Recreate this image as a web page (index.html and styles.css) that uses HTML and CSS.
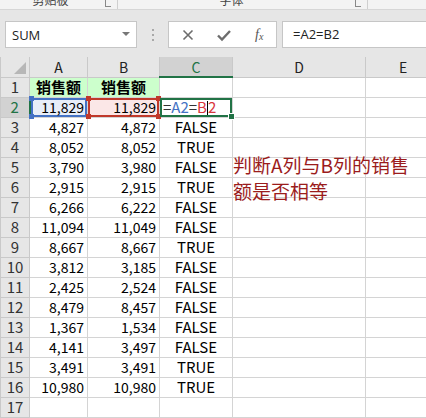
FILE: index.html
```html
<!DOCTYPE html>
<html>
<head>
<meta charset="utf-8">
<link rel="stylesheet" href="styles.css">
</head>
<body>
<div class="ribbon">
  <div class="grp g1"><span class="glabel">剪贴板</span><span class="launch"></span></div>
  <div class="grp g2"><span class="glabel">字体</span><span class="launch"></span></div>
</div>
<div class="fbar">
  <div class="namebox"><span>SUM</span><span class="caret"></span></div>
  <div class="dots"><i></i><i></i><i></i></div>
  <div class="fxgroup">
    <svg class="ic" width="14" height="14" viewBox="0 0 14 14"><path d="M2.5 2.5 L11.5 11.5 M11.5 2.5 L2.5 11.5" stroke="#6d6d6d" stroke-width="1.6" fill="none"/></svg>
    <svg class="ic" width="16" height="14" viewBox="0 0 16 14"><path d="M2 7.5 L6 11.5 L14 3" stroke="#6d6d6d" stroke-width="2.4" fill="none"/></svg>
    <span class="fx">f<sub>x</sub></span>
  </div>
  <div class="finput">=A2=B2</div>
</div>
<div class="sheet">
<table class="grid">
  <colgroup><col class="c0"><col class="ca"><col class="cb"><col class="cc"><col class="cd"><col class="ce"></colgroup>
  <tr class="hdr"><th class="corner"><span class="tri"></span></th><th>A</th><th>B</th><th class="hsel">C</th><th>D</th><th>E</th></tr>
  <tr><th>1</th><td class="green title">销售额</td><td class="green title">销售额</td><td></td><td></td><td></td></tr>
  <tr><th class="rsel">2</th><td class="num sela"><span class="h bh tl"></span><span class="h bh bl"></span>11,829</td><td class="num selb"><span class="h rh tl"></span><span class="h rh tr"></span><span class="h rh bl"></span><span class="h rh br"></span>11,829</td><td class="selc"><span class="k">=</span><span class="ba">A2</span><span class="k">=</span><span class="rb">B</span><span class="cur"></span><span class="rb">2</span><span class="h gh br"></span></td><td></td><td></td></tr>
  <tr><th>3</th><td class="num">4,827</td><td class="num">4,872</td><td class="bool">FALSE</td><td></td><td></td></tr>
  <tr><th>4</th><td class="num">8,052</td><td class="num">8,052</td><td class="bool">TRUE</td><td></td><td></td></tr>
  <tr><th>5</th><td class="num">3,790</td><td class="num">3,980</td><td class="bool">FALSE</td><td></td><td></td></tr>
  <tr><th>6</th><td class="num">2,915</td><td class="num">2,915</td><td class="bool">TRUE</td><td></td><td></td></tr>
  <tr><th>7</th><td class="num">6,266</td><td class="num">6,222</td><td class="bool">FALSE</td><td></td><td></td></tr>
  <tr><th>8</th><td class="num">11,094</td><td class="num">11,049</td><td class="bool">FALSE</td><td></td><td></td></tr>
  <tr><th>9</th><td class="num">8,667</td><td class="num">8,667</td><td class="bool">TRUE</td><td></td><td></td></tr>
  <tr><th>10</th><td class="num">3,812</td><td class="num">3,185</td><td class="bool">FALSE</td><td></td><td></td></tr>
  <tr><th>11</th><td class="num">2,425</td><td class="num">2,524</td><td class="bool">FALSE</td><td></td><td></td></tr>
  <tr><th>12</th><td class="num">8,479</td><td class="num">8,457</td><td class="bool">FALSE</td><td></td><td></td></tr>
  <tr><th>13</th><td class="num">1,367</td><td class="num">1,534</td><td class="bool">FALSE</td><td></td><td></td></tr>
  <tr><th>14</th><td class="num">4,141</td><td class="num">3,497</td><td class="bool">FALSE</td><td></td><td></td></tr>
  <tr><th>15</th><td class="num">3,491</td><td class="num">3,491</td><td class="bool">TRUE</td><td></td><td></td></tr>
  <tr><th>16</th><td class="num">10,980</td><td class="num">10,980</td><td class="bool">TRUE</td><td></td><td></td></tr>
  <tr><th>17</th><td></td><td></td><td></td><td></td><td></td></tr>
</table>
<div class="note">判断A列与B列的销售<br>额是否相等</div>
</div>
</body>
</html>
```
FILE: styles.css
```css
html, body {
  margin: 0;
  padding: 0;
  background: #ffffff;
  font-family: "Noto Sans CJK SC", "Noto Sans", sans-serif;
  width: 426px;
  height: 418px;
  overflow: hidden;
}
.ribbon {
  height: 10px;
  background: #f3f3f3;
  border-bottom: 1px solid #d6d6d6;
  display: flex;
  overflow: hidden;
  box-sizing: border-box;
}
.grp {
  position: relative;
  height: 10px;
  border-right: 1px solid #cfcfcf;
  box-sizing: border-box;
}
.g1 { width: 118px; }
.g2 { width: 250px; }
.glabel {
  display: block;
  font-size: 12px;
  line-height: 12px;
  margin-top: -6px;
  color: #444;
  text-align: center;
}
.g1 .glabel { padding-right: 16px; }
.g2 .glabel { padding-right: 22px; }
.launch {
  position: absolute;
  right: 6px;
  top: 0;
  width: 5px;
  height: 6px;
  border-left: 1px solid #888;
  border-bottom: 1px solid #888;
}
.fbar {
  height: 47px;
  background: #e6e6e6;
  display: flex;
  align-items: flex-start;
  padding-top: 11px;
  box-sizing: border-box;
}
.namebox {
  margin-left: 5px;
  width: 132px;
  height: 27px;
  background: #fff;
  border: 1px solid #c6c6c6;
  box-sizing: border-box;
  display: flex;
  align-items: center;
  justify-content: space-between;
  padding: 0 6px 0 6px;
  font-family: "Open Sans", "Noto Sans", sans-serif;
  font-size: 13px;
  color: #222;
}
.caret {
  width: 0;
  height: 0;
  border-left: 4px solid transparent;
  border-right: 4px solid transparent;
  border-top: 4px solid #777;
  margin-bottom: 2px;
}
.dots {
  width: 31px;
  height: 27px;
  display: flex;
  flex-direction: column;
  align-items: center;
  justify-content: center;
  gap: 3px;
}
.dots i {
  display: block;
  width: 2px;
  height: 2px;
  background: #a8a8a8;
}
.fxgroup {
  width: 109px;
  height: 27px;
  background: #fff;
  border: 1px solid #c6c6c6;
  box-sizing: border-box;
  display: flex;
  align-items: center;
  padding-left: 12px;
  gap: 21px;
}
.fx {
  font-family: "Liberation Serif", serif;
  font-style: italic;
  font-size: 14px;
  color: #555;
  margin-left: 2px;
}
.fx sub {
  font-size: 10px;
  vertical-align: -1px;
}
.finput {
  margin-left: 5px;
  flex: 1;
  height: 27px;
  background: #fff;
  border: 1px solid #c6c6c6;
  border-right: none;
  box-sizing: border-box;
  font-family: "Open Sans", "Noto Sans", sans-serif;
  font-size: 13px;
  line-height: 25px;
  padding-left: 10px;
  color: #222;
}
.sheet {
  position: relative;
}
.grid {
  border-collapse: collapse;
  table-layout: fixed;
  width: 440px;
}
.c0 { width: 29px; }
.ca { width: 58px; }
.cb { width: 72px; }
.cc { width: 73px; }
.cd { width: 133px; }
.ce { width: 75px; }
.grid tr { height: 20px; }
.grid th, .grid td {
  height: 20px;
  padding: 0;
  border: 1px solid #d4d4d4;
  box-sizing: border-box;
  white-space: nowrap;
  line-height: 18px;
}
.grid th {
  background: #e6e6e6;
  border-color: #c9c9c9;
  font-weight: normal;
  font-size: 15px;
  color: #333;
  text-align: center;
}
.hdr th {
  font-size: 14px;
  border-top: none;
  color: #222;
}
.grid th.hsel {
  background: #d2d2d2;
  color: #217346;
  border-bottom: 2px solid #217346;
}
.grid th.rsel {
  background: #d2d2d2;
  color: #217346;
  border-right: 2px solid #217346;
}
.corner { position: relative; }
.tri {
  position: absolute;
  right: 3px;
  bottom: 3px;
  width: 0;
  height: 0;
  border-left: 12px solid transparent;
  border-bottom: 12px solid #b7b7b7;
}
.green { background: #ccffcc; }
.title {
  text-align: center;
  font-weight: bold;
  font-size: 15px;
}
.num {
  text-align: right;
  font-size: 14px;
  padding-right: 3px !important;
  color: #000;
}
.bool {
  text-align: center;
  font-size: 15px;
  color: #000;
}
.sela, .selb, .selc { position: relative; }
.sela {
  background: #e8eef8;
  box-shadow: inset 0 0 0 2px #4472c4;
}
.selb {
  background: #fbe7e7;
  box-shadow: inset 0 0 0 2px #c0392b;
}
.selc {
  box-shadow: inset 0 0 0 2px #217346;
  font-size: 15px;
  line-height: 18px;
  padding-left: 3px !important;
  color: #222;
}
.h {
  position: absolute;
  width: 5px;
  height: 5px;
}
.bh { background: #4472c4; }
.rh { background: #c0392b; }
.gh { background: #217346; border: 1px solid #fff; box-sizing: content-box; }
.tl { left: -2px; top: -2px; }
.tr { right: -2px; top: -2px; }
.bl { left: -2px; bottom: -2px; }
.br { right: -2px; bottom: -2px; }
.gh.br { right: -3px; bottom: -3px; }
.ba { color: #4472c4; }
.rb { color: #d9363e; }
.k { color: #333; }
.cur {
  display: inline-block;
  width: 1px;
  height: 14px;
  background: #000;
  vertical-align: -2px;
}
.note {
  position: absolute;
  left: 233px;
  top: 95px;
  font-size: 19px;
  line-height: 26px;
  color: #9b1c1c;
}
```
